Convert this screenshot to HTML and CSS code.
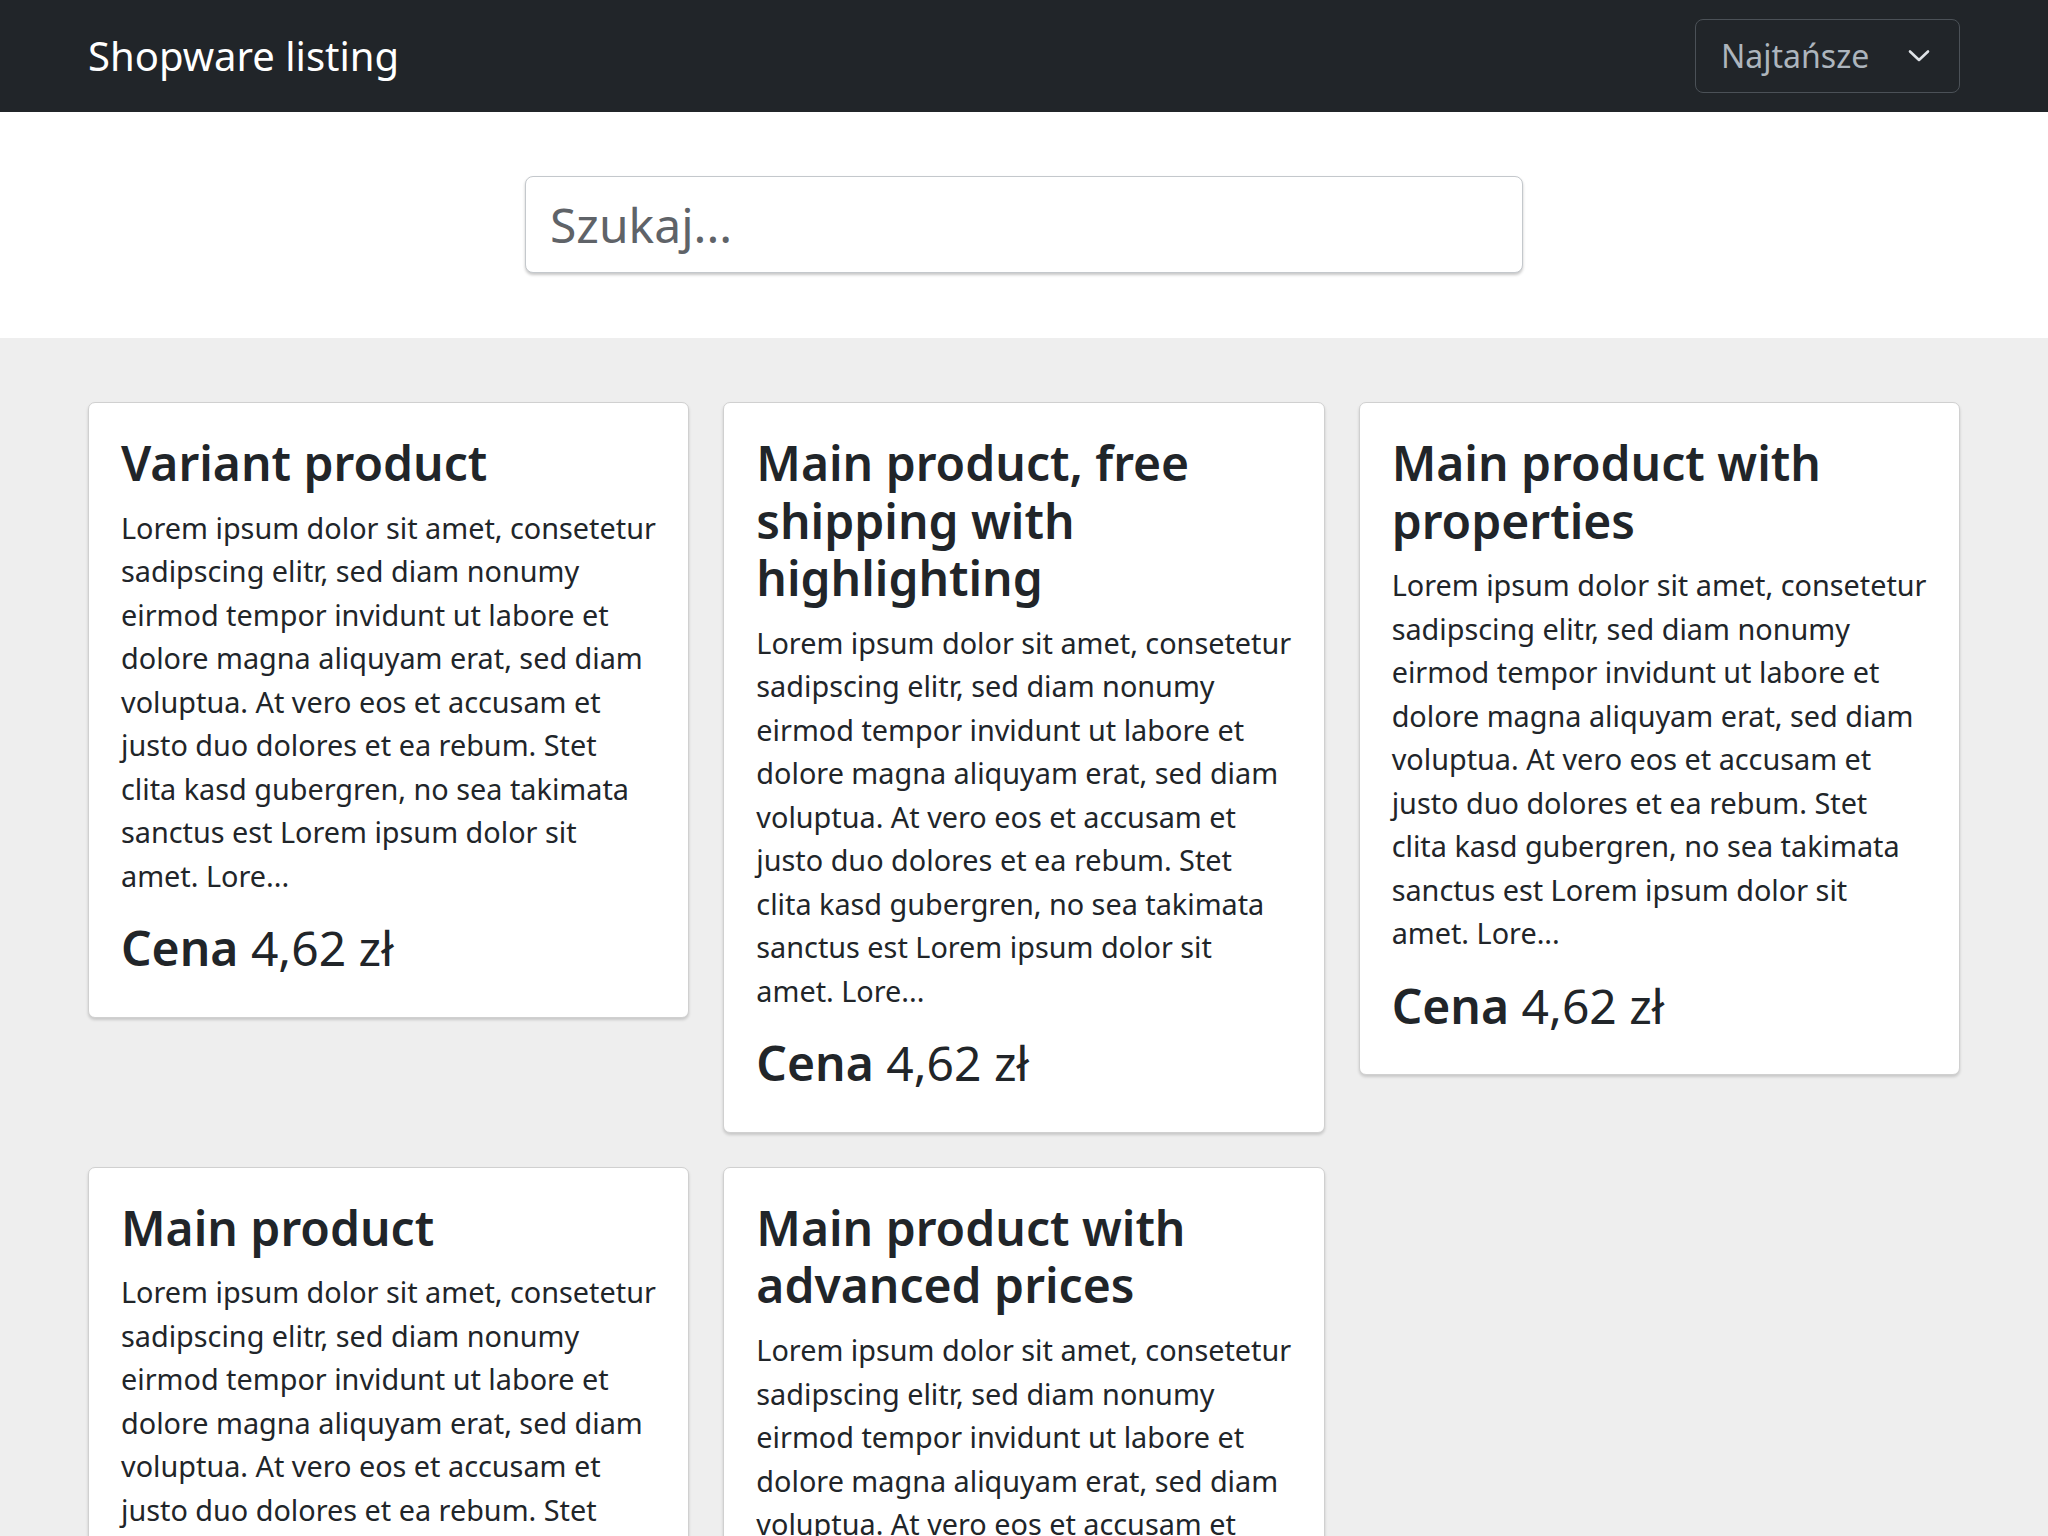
FILE: index.html
```html
<!DOCTYPE html>
<html lang="pl">
<head>
<meta charset="utf-8">
<title>Shopware listing</title>
<link rel="stylesheet" href="styles.css">
</head>
<body>
<header class="navbar">
  <div class="brand">Shopware listing</div>
  <div class="sort">
    <span class="sort-label">Najtańsze</span>
    <svg class="chevron" width="22" height="14" viewBox="0 0 22 14"><path d="M2 2.5 L11 11 L20 2.5" fill="none" stroke="#dee2e6" stroke-width="2.6" stroke-linecap="round" stroke-linejoin="round"/></svg>
  </div>
</header>
<section class="search-wrap">
  <input class="search" type="text" placeholder="Szukaj...">
</section>
<main class="listing">
  <div class="grid">
    <article class="card">
      <h3 class="title">Variant product</h3>
      <p class="desc">Lorem ipsum dolor sit amet, consetetur sadipscing elitr, sed diam nonumy eirmod tempor invidunt ut labore et dolore magna aliquyam erat, sed diam voluptua. At vero eos et accusam et justo duo dolores et ea rebum. Stet clita kasd gubergren, no sea takimata sanctus est Lorem ipsum dolor sit amet. Lore...</p>
      <h3 class="price"><strong>Cena</strong> 4,62 zł</h3>
    </article>
    <article class="card">
      <h3 class="title">Main product, free shipping with highlighting</h3>
      <p class="desc">Lorem ipsum dolor sit amet, consetetur sadipscing elitr, sed diam nonumy eirmod tempor invidunt ut labore et dolore magna aliquyam erat, sed diam voluptua. At vero eos et accusam et justo duo dolores et ea rebum. Stet clita kasd gubergren, no sea takimata sanctus est Lorem ipsum dolor sit amet. Lore...</p>
      <h3 class="price"><strong>Cena</strong> 4,62 zł</h3>
    </article>
    <article class="card">
      <h3 class="title">Main product with properties</h3>
      <p class="desc">Lorem ipsum dolor sit amet, consetetur sadipscing elitr, sed diam nonumy eirmod tempor invidunt ut labore et dolore magna aliquyam erat, sed diam voluptua. At vero eos et accusam et justo duo dolores et ea rebum. Stet clita kasd gubergren, no sea takimata sanctus est Lorem ipsum dolor sit amet. Lore...</p>
      <h3 class="price"><strong>Cena</strong> 4,62 zł</h3>
    </article>
    <article class="card">
      <h3 class="title">Main product</h3>
      <p class="desc">Lorem ipsum dolor sit amet, consetetur sadipscing elitr, sed diam nonumy eirmod tempor invidunt ut labore et dolore magna aliquyam erat, sed diam voluptua. At vero eos et accusam et justo duo dolores et ea rebum. Stet clita kasd gubergren, no sea takimata sanctus est Lorem ipsum dolor sit amet. Lore...</p>
      <h3 class="price"><strong>Cena</strong> 4,62 zł</h3>
    </article>
    <article class="card">
      <h3 class="title">Main product with advanced prices</h3>
      <p class="desc">Lorem ipsum dolor sit amet, consetetur sadipscing elitr, sed diam nonumy eirmod tempor invidunt ut labore et dolore magna aliquyam erat, sed diam voluptua. At vero eos et accusam et justo duo dolores et ea rebum. Stet clita kasd gubergren, no sea takimata sanctus est Lorem ipsum dolor sit amet. Lore...</p>
      <h3 class="price"><strong>Cena</strong> 4,62 zł</h3>
    </article>
  </div>
</main>
</body>
</html>
```
FILE: styles.css
```css
* { box-sizing: border-box; }
html, body { margin: 0; padding: 0; }
body {
  font-family: "Noto Sans", "Open Sans", sans-serif;
  color: #212529;
  background: #eeeeee;
  font-size: 28.8px;
  line-height: 43.5px;
}
.navbar {
  height: 112px;
  background: #212529;
  display: flex;
  align-items: center;
  justify-content: space-between;
  padding: 0 88px;
}
.brand {
  color: #ffffff;
  font-size: 40px;
  line-height: 1.2;
}
.sort {
  width: 265px;
  height: 74px;
  border: 1px solid #4b5157;
  border-radius: 8px;
  display: flex;
  align-items: center;
  justify-content: space-between;
  padding: 0 29px 0 25px;
}
.sort-label {
  color: #adb5bd;
  font-size: 32px;
  line-height: 1.2;
}
.chevron { display: block; }
.search-wrap {
  background: #ffffff;
  display: flex;
  justify-content: center;
  padding: 64px 0 65px;
}
.search {
  width: 998px;
  height: 97px;
  border: 1px solid #c4c8cc;
  border-radius: 8px;
  box-shadow: 0 2px 3px rgba(0,0,0,0.22);
  padding: 0 24px;
  font-family: inherit;
  font-size: 48px;
  color: #212529;
  background: #fff;
  outline: none;
}
.search::placeholder { color: #5f6368; }
.listing {
  padding: 64px 88px 40px 88px;
}
.grid {
  display: grid;
  grid-template-columns: repeat(3, 1fr);
  column-gap: 34px;
  row-gap: 34px;
  align-items: start;
}
.card {
  background: #ffffff;
  border: 1px solid #d0d0d0;
  border-radius: 7px;
  box-shadow: 0 2px 3px rgba(0,0,0,0.16);
  padding: 31px 32px 40px 32px;
}
.title {
  margin: 0 0 14px;
  font-size: 48px;
  line-height: 1.2;
  font-weight: 600;
}
.desc {
  margin: 0 0 22px;
}
.price {
  margin: 0;
  font-size: 48px;
  line-height: 1.2;
  font-weight: 400;
}
.price strong { font-weight: 600; }
```
